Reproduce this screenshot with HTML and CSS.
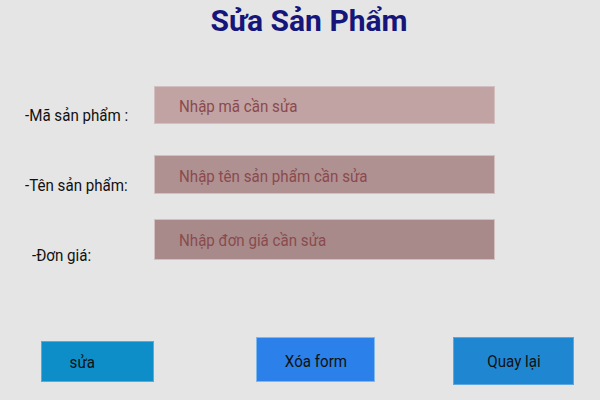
FILE: index.html
```html
<!DOCTYPE html>
<html lang="vi">
<head>
<meta charset="utf-8">
<title>Sửa Sản Phẩm</title>
<link rel="stylesheet" href="styles.css">
</head>
<body>
<div class="page">
  <h1 class="title">Sửa Sản Phẩm</h1>
  <div class="form">
    <div class="row row-1">
      <label class="label"><span class="sq">-Mã sản phẩm :</span></label>
      <div class="field f1"><span class="sq">Nhập mã cần sửa</span></div>
    </div>
    <div class="row row-2">
      <label class="label"><span class="sq">-Tên sản phẩm:</span></label>
      <div class="field f2"><span class="sq">Nhập tên sản phẩm cần sửa</span></div>
    </div>
    <div class="row row-3">
      <label class="label l3"><span class="sq">-Đơn giá:</span></label>
      <div class="field f3"><span class="sq">Nhập đơn giá cần sửa</span></div>
    </div>
  </div>
  <div class="actions">
    <button class="btn btn-edit"><span class="sq sq-c">sửa</span></button>
    <button class="btn btn-clear"><span class="sq sq-c">Xóa form</span></button>
    <button class="btn btn-back"><span class="sq sq-c">Quay lại</span></button>
  </div>
</div>
</body>
</html>
```
FILE: styles.css
```css
html, body {
  margin: 0;
  padding: 0;
  background: #e5e5e5;
  font-family: Roboto, "Noto Sans", sans-serif;
}
.page {
  width: 600px;
  height: 400px;
  display: flex;
  flex-direction: column;
}
.title {
  margin: 3px 0 0 0;
  padding-left: 18px;
  text-align: center;
  font-size: 30px;
  font-weight: 700;
  line-height: 36px;
  color: #15157a;
}
.sq {
  display: inline-block;
  white-space: nowrap;
  transform: scaleX(0.89);
  transform-origin: left center;
}
.sq-c { transform-origin: center center; }
.form {
  display: flex;
  flex-direction: column;
  margin-top: 47px;
}
.row {
  display: flex;
  align-items: flex-start;
}
.label {
  box-sizing: border-box;
  width: 154px;
  padding-left: 25px;
  font-size: 17px;
  line-height: 20px;
  color: #111;
}
.row-1 { height: 38px; }
.row-1 .label { margin-top: 19px; }
.row-2 { height: 39px; margin-top: 31px; }
.row-2 .label { margin-top: 20px; }
.row-3 { height: 41px; margin-top: 25px; }
.row-3 .label { margin-top: 26px; }
.label.l3 { padding-left: 32px; }
.field {
  box-sizing: border-box;
  width: 341px;
  height: 38px;
  padding: 9px 0 0 24px;
  font-size: 17px;
  line-height: 20px;
  color: #8a4a4e;
  border: 1px solid #d2c0c0;
}
.f1 { background: #c1a3a3; }
.f2 { background: #b09191; height: 39px; padding-top: 10px; }
.f3 { background: #a88a8a; height: 41px; padding-top: 10px; }
.actions {
  margin-top: auto;
  margin-bottom: 15px;
  display: flex;
  align-items: flex-start;
  padding-left: 41px;
}
.btn {
  box-sizing: border-box;
  font-family: Roboto, "Noto Sans", sans-serif;
  font-size: 17px;
  line-height: 20px;
  color: #111;
  border: 1px solid #7fb8ea;
  padding: 0;
  display: flex;
  align-items: center;
  justify-content: center;
}
.btn-edit {
  width: 113px;
  height: 41px;
  margin-top: 4px;
  padding-right: 30px;
  background: #0d8ec8;
  border-color: #5aaad8;
}
.btn-clear {
  width: 119px;
  height: 45px;
  margin-left: 102px;
  padding-top: 2px;
  background: #2b80e9;
}
.btn-back {
  width: 121px;
  height: 48px;
  margin-left: 78px;
  background: #1f87d1;
  border-color: #5ea6e0;
}
```
